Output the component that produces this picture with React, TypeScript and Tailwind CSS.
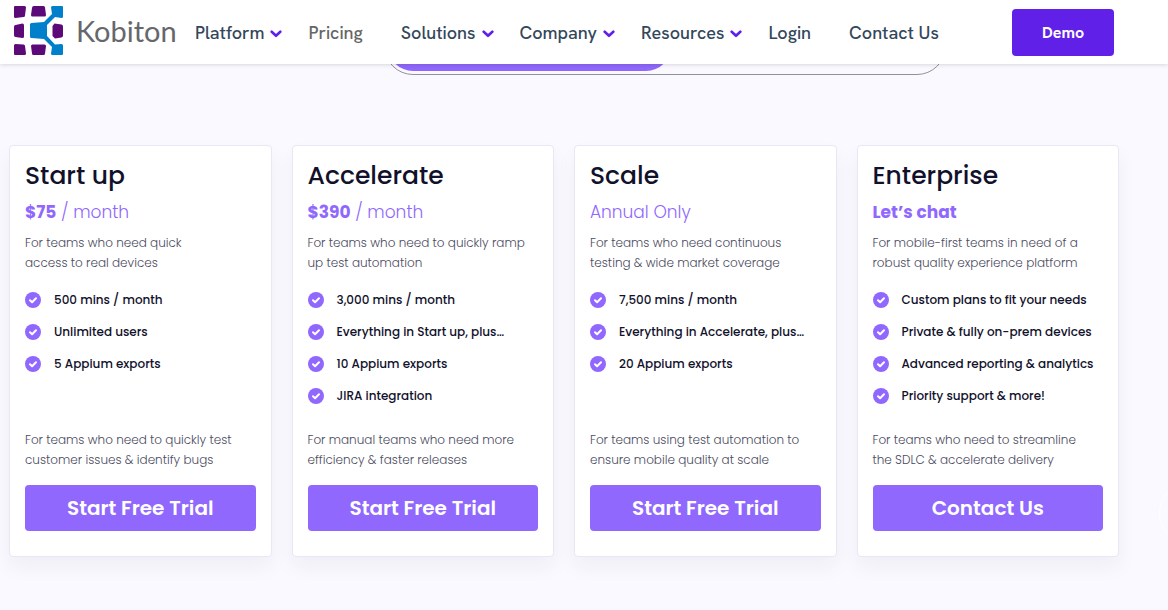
import React from "react";

type NavItem = { label: string; menu?: boolean; active?: boolean };

type Plan = {
  name: string;
  price: string;
  bold: boolean;
  per?: string;
  intro: string[];
  features: string[];
  summary: string[];
  action: string;
};

const navItems: NavItem[] = [
  { label: "Platform", menu: true },
  { label: "Pricing", active: true },
  { label: "Solutions", menu: true },
  { label: "Company", menu: true },
  { label: "Resources", menu: true },
  { label: "Login" },
  { label: "Contact Us" },
];

const plans: Plan[] = [
  {
    name: "Start up",
    price: "$75",
    bold: true,
    per: " / month",
    intro: ["For teams who need quick", "access to real devices"],
    features: ["500 mins / month", "Unlimited users", "5 Appium exports"],
    summary: ["For teams who need to quickly test", "customer issues & identify bugs"],
    action: "Start Free Trial",
  },
  {
    name: "Accelerate",
    price: "$390",
    bold: true,
    per: " / month",
    intro: ["For teams who need to quickly ramp", "up test automation"],
    features: ["3,000 mins / month", "Everything in Start up, plus…", "10 Appium exports", "JIRA integration"],
    summary: ["For manual teams who need more", "efficiency & faster releases"],
    action: "Start Free Trial",
  },
  {
    name: "Scale",
    price: "Annual Only",
    bold: false,
    intro: ["For teams who need continuous", "testing & wide market coverage"],
    features: ["7,500 mins / month", "Everything in Accelerate, plus…", "20 Appium exports"],
    summary: ["For teams using test automation to", "ensure mobile quality at scale"],
    action: "Start Free Trial",
  },
  {
    name: "Enterprise",
    price: "Let’s chat",
    bold: true,
    intro: ["For mobile-first teams in need of a", "robust quality experience platform"],
    features: [
      "Custom plans to fit your needs",
      "Private & fully on-prem devices",
      "Advanced reporting & analytics",
      "Priority support & more!",
    ],
    summary: ["For teams who need to streamline", "the SDLC & accelerate delivery"],
    action: "Contact Us",
  },
];

function Logo() {
  return (
    <a href="#" className="flex items-center gap-3 w-[163px] shrink-0 pb-[2px]">
      <svg width="50" height="50" viewBox="0 0 50 50" className="shrink-0" aria-hidden="true">
        <g fill="#5c0a78">
          <path d="M1 0H10.5Q12 0 12 1.5L11 9.5Q11 11 9.5 11L1.5 12Q0 12 0 10.5V1Q0 0 1 0Z" />
          <path d="M20 0H29.500Q31 0 31 1.500L32 9Q32 10.500 30.500 10.500H18.500Q17 10.500 17 9L18 2Q18 0 20 0Z" />
          <path d="M1.500 19L8.500 17.500Q10 17.500 10 19.500V30.500Q10 32 8.500 32L1.500 31Q0 31 0 29V21Q0 19 1.500 19Z" />
          <path d="M40.500 17.500L47.500 18.500Q49 19 49 20.500V29.500Q49 31 47.500 31.500L41 32.500L38.500 30V20Z" />
          <path d="M1.500 38L9.500 38.500Q11 38.500 11 40L12 47.500Q12 49 10.500 49H1Q0 49 0 48V39.500Q0 38 1.500 38Z" />
          <path d="M18.500 38.500H30.500Q32 38.500 32 40L31 47.500Q31 49 29.500 49H19.500Q18 49 18 47.500L17 40Q17 38.500 18.500 38.500Z" />
        </g>
        <path
          fill="#0080cb"
          d="M38.500 0H48Q49 0 49 1V10.500Q49 12 47.500 12L41 11L33 19V30L41 38.500L47.500 38Q49 38 49 39.500V48Q49 49 48 49H38.500Q37 49 37 47.500L38 41L30 33L17.500 32Q16 32 16 30.500V18.500Q16 17 17.500 17L30 16L38 8L37 1.500Q37 0 38.500 0Z"
        />
      </svg>
      <span className="font-[Lato] text-[29px] leading-9 text-[#66676b]">Kobiton</span>
    </a>
  );
}

function Chevron() {
  return (
    <svg width="12" height="8" viewBox="0 0 12 8" fill="none" className="mt-[2px] shrink-0" aria-hidden="true">
      <path d="M1.7 1.7L6 5.8L10.3 1.7" stroke="#6020e8" strokeWidth="2.6" strokeLinecap="round" strokeLinejoin="round" />
    </svg>
  );
}

function Check() {
  return (
    <svg width="16" height="16" viewBox="0 0 16 16" fill="none" className="shrink-0" aria-hidden="true">
      <circle cx="8" cy="8" r="8" fill="#9068fd" />
      <path d="M5 8.3L7.1 10.3L11 6.3" stroke="#fff" strokeWidth="2" strokeLinecap="round" strokeLinejoin="round" />
    </svg>
  );
}

function Header() {
  return (
    <header className="sticky top-0 z-10 flex h-16 items-center bg-white pl-[14px] pr-[54px] font-['HK_Grotesk','Hanken_Grotesk',Roboto,sans-serif] shadow-[0_0_5px_rgba(0,0,0,0.2)]">
      <Logo />
      <nav className="ml-[18px] flex items-center gap-[26px] pt-[2px] text-lg leading-6 font-medium text-[#33475b]">
        {navItems.map((item) =>
          item.menu ? (
            <button key={item.label} className="flex items-center gap-[6px] whitespace-nowrap cursor-pointer">
              {item.label}
              <Chevron />
            </button>
          ) : (
            <a
              key={item.label}
              href="#"
              className={`whitespace-nowrap pr-3 ${item.active ? "text-[#666]" : ""}`}>
              {item.label}
            </a>
          )
        )}
      </nav>
      <button className="ml-auto h-[47px] w-[102px] shrink-0 rounded bg-[#6020e8] pt-[2px] text-base font-bold text-white cursor-pointer">
        Demo
      </button>
    </header>
  );
}

function PlanCard({ plan }: { plan: Plan }) {
  return (
    <article className="flex flex-col rounded border border-[#e9e7f5] bg-white px-[15px] pt-[14px] pb-[25px] shadow-[0_10px_20px_rgba(40,30,80,0.05)]">
      <h2 className="text-[25px] leading-8 font-medium text-[#11112b]">{plan.name}</h2>
      <p className="mt-2 text-[17px] leading-6 font-light text-[#9068fd]">
        <span className={plan.bold ? "font-bold" : ""}>{plan.price}</span>
        {plan.per}
      </p>
      <p className="mt-[9px] text-xs leading-5 font-light text-[#4b4b60]">
        {plan.intro[0]}
        <br />
        {plan.intro[1]}
      </p>
      <ul className="mt-[19px] flex min-h-28 flex-col gap-4">
        {plan.features.map((feature) => (
          <li key={feature} className="flex items-center gap-[13px] text-xs leading-4 font-medium text-[#11112b]">
            <Check />
            {feature}
          </li>
        ))}
      </ul>
      <p className="mt-[26px] text-xs leading-5 font-light text-[#4b4b60]">
        {plan.summary[0]}
        <br />
        {plan.summary[1]}
      </p>
      <button className="mt-[15px] h-[46px] rounded bg-[#9068fd] text-xl font-semibold text-white cursor-pointer">
        {plan.action}
      </button>
    </article>
  );
}

export default function App() {
  return (
    <div className="min-h-screen bg-[#faf9ff] font-[Poppins,Inter,sans-serif]">
      <Header />
      <main className="relative overflow-x-clip pl-[9px] pr-[49px] pb-[53px]">
        <div className="mx-auto -mt-[47px] flex h-[58px] w-[562px] translate-x-[101px] rounded-full border border-[#93919e] p-[3px]">
          <button aria-label="Annual" className="w-[283px] rounded-full bg-[#9068fd]" />
          <button aria-label="Monthly" className="flex-1 rounded-full" />
        </div>
        <div className="mt-[70px] grid grid-cols-4 gap-5">
          {plans.map((plan) => (
            <PlanCard key={plan.name} plan={plan} />
          ))}
        </div>
        {/* decorative ring, cut off by the page edge */}
        <div className="absolute right-[-53px] bottom-[66px] h-[62px] w-[62px] rounded-full border border-white" />
      </main>
    </div>
  );
}
